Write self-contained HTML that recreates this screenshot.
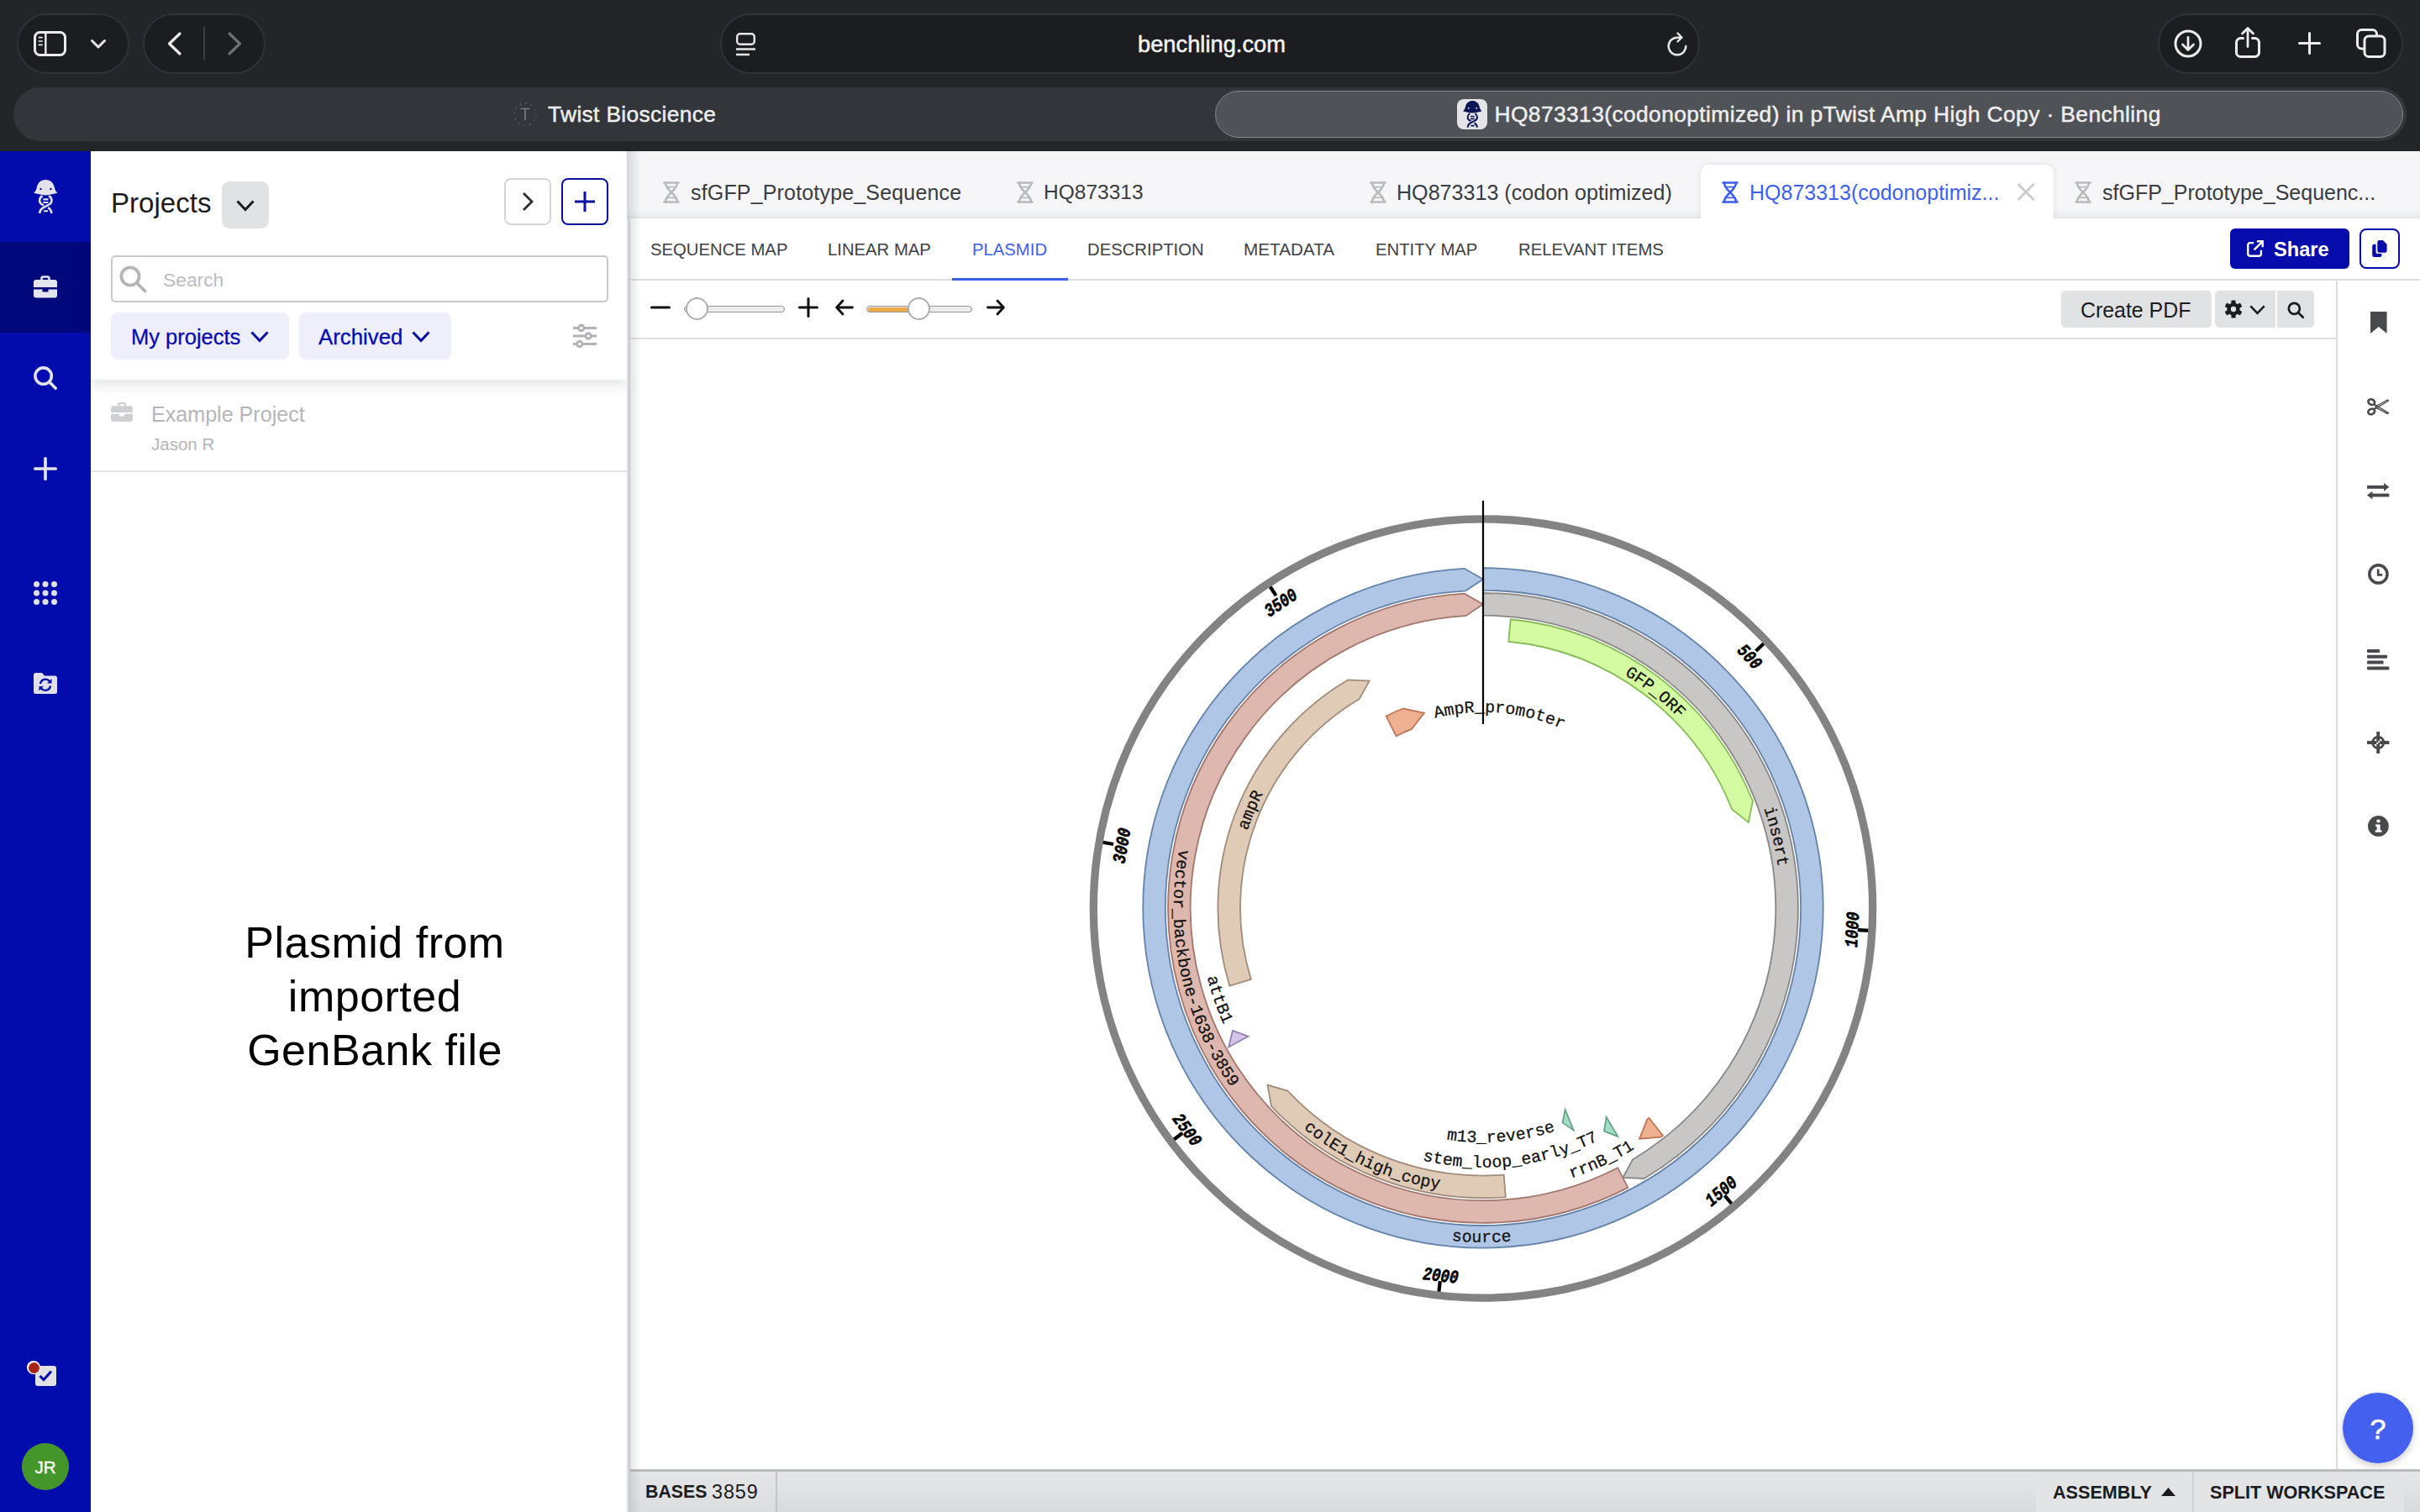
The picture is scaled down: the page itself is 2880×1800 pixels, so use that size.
<!DOCTYPE html>
<html><head><meta charset="utf-8"><title>Benchling</title>
<style>
*{box-sizing:border-box;margin:0;padding:0}
html,body{width:2880px;height:1800px;overflow:hidden;background:#fff;font-family:"Liberation Sans",sans-serif;}
.abs{position:absolute}
.t{position:absolute;white-space:pre;line-height:1}
svg{position:absolute;overflow:visible}
#chrome{position:absolute;left:0;top:0;width:2880px;height:180px;background:#232629}
.pill{position:absolute;top:16px;height:72px;background:#1c1d20;border:2px solid #2f3236;border-radius:36px}
#tabstrip{position:absolute;left:16px;top:104px;width:2848px;height:64px;border-radius:32px;background:#323539}
#acttab{position:absolute;left:1446px;top:108px;width:1414px;height:56px;border-radius:28px;background:#4f5256;border:1.6px solid #83868a}
#side{position:absolute;left:0;top:180px;width:108px;height:1620px;background:#020cad}
#sidesel{position:absolute;left:0;top:288px;width:108px;height:108px;background:#00087b}
#panel{position:absolute;left:108px;top:180px;width:638px;height:1620px;background:#fff}
#panelhead{position:absolute;left:108px;top:180px;width:638px;height:272px;background:#fff;box-shadow:0 6px 14px rgba(30,40,70,.13)}

#tabbar{position:absolute;left:746px;top:180px;width:2134px;height:80px;background:linear-gradient(#f6f6f8 0,#f6f6f8 86%,#eceef0 96%,#e3e5e8 100%)}
#main{position:absolute;left:746px;top:260px;width:2134px;height:1540px;background:#fff}
#lshadow{position:absolute;left:746px;top:180px;width:16px;height:1620px;background:linear-gradient(90deg,rgba(150,155,165,.35),rgba(150,155,165,0))}
#lborder{position:absolute;left:748px;top:260px;width:2px;height:1540px;background:#c9cbce}
.tabt{position:absolute;white-space:pre;line-height:1;font-size:25px;color:#3a3c41;top:217px}
.sub{position:absolute;white-space:pre;line-height:1;font-size:20.3px;color:#3e4045;top:287px}
#acttab2{position:absolute;left:2024px;top:196px;width:420px;height:66px;background:#fff;border-radius:10px 10px 0 0;box-shadow:0 0 6px rgba(60,70,90,.12)}
</style></head>
<body>

<div id="chrome">
 <div class="pill" style="left:20px;width:134px"></div>
 <div class="pill" style="left:170px;width:146px"></div>
 <div class="pill" style="left:857px;width:1166px"></div>
 <div class="pill" style="left:2568px;width:292px"></div>
 <div id="tabstrip"></div>
 <div id="acttab"></div>
 <!-- sidebar icon -->
 <svg style="left:40px;top:37px" width="39" height="30" viewBox="0 0 39 30" fill="none" stroke="#ececec" stroke-width="3">
  <rect x="1.5" y="1.5" width="36" height="27" rx="6"/>
  <path d="M14.3 1.5V28.5" stroke-width="2.4"/>
  <path d="M6.4 7.6H10M6.4 12H10M6.4 16.4H10" stroke-width="1.7" stroke-linecap="round"/>
 </svg>
 <svg style="left:108px;top:47px" width="18" height="11" viewBox="0 0 18 11" fill="none" stroke="#e6e6e6" stroke-width="3" stroke-linecap="round" stroke-linejoin="round"><path d="M1.5 1.5L9 9L16.5 1.5"/></svg>
 <!-- back / fwd -->
 <svg style="left:199px;top:38px" width="17" height="28" viewBox="0 0 17 28" fill="none" stroke="#ececec" stroke-width="3.2" stroke-linecap="round" stroke-linejoin="round"><path d="M15 2L2.5 14L15 26"/></svg>
 <div class="abs" style="left:242px;top:32px;width:2px;height:40px;background:#3a3d41"></div>
 <svg style="left:271px;top:38px" width="17" height="28" viewBox="0 0 17 28" fill="none" stroke="#6d6f73" stroke-width="3.2" stroke-linecap="round" stroke-linejoin="round"><path d="M2 2L14.5 14L2 26"/></svg>
 <!-- url bar reader icon -->
 <svg style="left:876px;top:39px" width="23" height="28" viewBox="0 0 23 28" fill="none" stroke="#e6e6e6" stroke-width="2.4" stroke-linecap="butt"><rect x="1.2" y="1.2" width="20.6" height="12.6" rx="3.5"/><path d="M0 19.5H23M0 26H16"/></svg>
 <div class="t" style="left:1354px;top:39px;font-size:27.3px;color:#f3f3f3;-webkit-text-stroke:.5px #f3f3f3">benchling.com</div>
 <!-- reload -->
 <svg style="left:1984px;top:38px" width="25" height="29" viewBox="0 0 25 29" fill="none" stroke="#e6e6e6" stroke-width="2.4" stroke-linecap="round" stroke-linejoin="round"><path d="M22.3 17A10.3 10.3 0 1 1 12 6.7H17"/><path d="M12.5 1.5L17.5 6.7L12.5 11.5"/></svg>
 <!-- right pill icons -->
 <svg style="left:2587px;top:35px" width="34" height="34" viewBox="0 0 34 34" fill="none" stroke="#ececec" stroke-width="3" stroke-linecap="round" stroke-linejoin="round"><circle cx="17" cy="17" r="15"/><path d="M17 9.5V24M10.5 18L17 24.5L23.5 18" stroke-width="2.8"/></svg>
 <svg style="left:2660px;top:32px" width="30" height="37" viewBox="0 0 30 37" fill="none" stroke="#ececec" stroke-width="3" stroke-linecap="round" stroke-linejoin="round"><path d="M9.5 13.5H6.5A5 5 0 0 0 1.5 18.5V30.5A5 5 0 0 0 6.5 35.5H23.5A5 5 0 0 0 28.5 30.5V18.5A5 5 0 0 0 23.5 13.5H20.5"/><path d="M15 23.5V2M8.5 8L15 1.5L21.5 8" stroke-width="2.8"/></svg>
 <svg style="left:2735px;top:38px" width="27" height="27" viewBox="0 0 27 27" fill="none" stroke="#ececec" stroke-width="3" stroke-linecap="round"><path d="M13.5 1.5V25.5M1.5 13.5H25.5"/></svg>
 <svg style="left:2804px;top:34px" width="36" height="35" viewBox="0 0 36 35" fill="none" stroke="#ececec" stroke-width="3" stroke-linejoin="round"><path d="M9 24H6.5A5 5 0 0 1 1.5 19V6.5A5 5 0 0 1 6.5 1.5H19.5A5 5 0 0 1 24.5 6.5V8.5"/><rect x="10" y="9" width="24" height="24.5" rx="5"/></svg>
 <!-- tab 1 -->
 <svg style="left:611px;top:120px" width="28" height="32" viewBox="0 0 28 32" fill="none" stroke="#63666a" stroke-width="1.4"><circle cx="14" cy="16" r="13" stroke-dasharray="1.6 5.2"/><path d="M8.5 9.5H19.5M14 9.5V23" stroke="#7b7e82" stroke-width="1.6"/></svg>
 <div class="t" style="left:652px;top:123.1px;font-size:26.4px;letter-spacing:.33px;color:#efefef;-webkit-text-stroke:.45px #efefef">Twist Bioscience</div>
 <!-- tab 2 favicon -->
 <div class="abs" style="left:1734px;top:117.6px;width:36px;height:36.5px;border-radius:8px;background:#e5e5e7"></div>
 <svg style="left:1740.6px;top:119.9px" width="22.7" height="31.7" viewBox="0 0 22.7 31.7"><path d="M0 12.3C1.8 11.2 2.6 9.2 3.1 6.7C4.3 2.2 7.3 0 11.35 0C15.4 0 18.4 2.2 19.6 6.7C20.1 9.2 20.9 11.2 22.7 12.3C19.3 13.5 15.3 14.3 11.35 14.6C7.3 14.3 3.3 13.5 0 12.3Z" fill="#0a1555"/><circle cx="6.7" cy="8.7" r=".95" fill="#f0f0f2"/><circle cx="16.2" cy="8.7" r=".95" fill="#f0f0f2"/><g fill="none" stroke="#0a1555" stroke-width="2"><path d="M14.4 15.2C17.9 17.4 17.9 21.6 14.6 23.4L8.6 26.6C6.4 27.9 5.8 29.6 5.8 31.7"/><path d="M8.3 15.2C4.8 17.4 4.8 21.6 8.1 23.4L9.6 24.2M13.6 26.3C16.3 27.9 16.9 29.6 16.9 31.7"/><path d="M9 18.5H13.9M9 21.45H13.9M9.5 29.55H13.6" stroke-width="1.7"/></g></svg>
 <div class="t" style="left:1778.5px;top:123.1px;font-size:26.4px;letter-spacing:.385px;color:#efefef;-webkit-text-stroke:.45px #efefef">HQ873313(codonoptimized) in pTwist Amp High Copy · Benchling</div>
</div>

<div id="side"></div><div id="sidesel"></div>
<!-- logo -->
<svg style="left:39.6px;top:213.8px" width="28.6" height="40.0" viewBox="0 0 22.7 31.7"><path d="M0 12.3C1.8 11.2 2.6 9.2 3.1 6.7C4.3 2.2 7.3 0 11.35 0C15.4 0 18.4 2.2 19.6 6.7C20.1 9.2 20.9 11.2 22.7 12.3C19.3 13.5 15.3 14.3 11.35 14.6C7.3 14.3 3.3 13.5 0 12.3Z" fill="#e4e4e8"/><circle cx="6.7" cy="8.7" r=".95" fill="#020cad"/><circle cx="16.2" cy="8.7" r=".95" fill="#020cad"/><g fill="none" stroke="#e4e4e8" stroke-width="2"><path d="M14.4 15.2C17.9 17.4 17.9 21.6 14.6 23.4L8.6 26.6C6.4 27.9 5.8 29.6 5.8 31.7"/><path d="M8.3 15.2C4.8 17.4 4.8 21.6 8.1 23.4L9.6 24.2M13.6 26.3C16.3 27.9 16.9 29.6 16.9 31.7"/><path d="M9 18.5H13.9M9 21.45H13.9M9.5 29.55H13.6" stroke-width="1.7"/></g></svg>
<!-- briefcase -->
<svg style="left:40px;top:328px" width="28" height="27" viewBox="0 0 28 27"><path d="M9.5 5V3.5A2 2 0 0 1 11.5 1.5H16.5A2 2 0 0 1 18.5 3.5V5" fill="none" stroke="#e4e4ee" stroke-width="2.6"/><path d="M3 5H25A3 3 0 0 1 28 8V14H0V8A3 3 0 0 1 3 5Z" fill="#e4e4ee"/><path d="M0 16.5H10.5V19.5H17.5V16.5H28V23.5A3 3 0 0 1 25 26.5H3A3 3 0 0 1 0 23.5Z" fill="#e4e4ee"/></svg>
<!-- search -->
<svg style="left:40px;top:436px" width="28" height="28" viewBox="0 0 28 28" fill="none" stroke="#e2e2ea" stroke-width="3.6" stroke-linecap="round"><circle cx="11.6" cy="11.6" r="9.7"/><path d="M19 19L26.2 26.2"/></svg>
<!-- plus -->
<svg style="left:40px;top:544px" width="28" height="28" viewBox="0 0 28 28" fill="none" stroke="#e2e2ea" stroke-width="3.7" stroke-linecap="round"><path d="M14 1.8V26.2M1.8 14H26.2"/></svg>
<!-- grid -->
<svg style="left:40px;top:692px" width="28" height="28" viewBox="0 0 28 28" fill="#e0e0ea"><circle cx="3.5" cy="3.5" r="3.5"/><circle cx="14" cy="3.5" r="3.5"/><circle cx="24.5" cy="3.5" r="3.5"/><circle cx="3.5" cy="14" r="3.5"/><circle cx="14" cy="14" r="3.5"/><circle cx="24.5" cy="14" r="3.5"/><circle cx="3.5" cy="24.5" r="3.5"/><circle cx="14" cy="24.5" r="3.5"/><circle cx="24.5" cy="24.5" r="3.5"/></svg>
<!-- folder sync -->
<svg style="left:40px;top:801px" width="28" height="25" viewBox="0 0 28 25"><path d="M0 2.5A2.5 2.5 0 0 1 2.5 0H10L13 3.5H25.5A2.5 2.5 0 0 1 28 6V22.5A2.5 2.5 0 0 1 25.5 25H2.5A2.5 2.5 0 0 1 0 22.5Z" fill="#e0e0ea"/><g fill="none" stroke="#020cad" stroke-width="2.4"><path d="M8 13A6.2 6.2 0 0 1 19 10"/><path d="M20 15.5A6.2 6.2 0 0 1 9 18.5"/></g><path d="M21.5 7V12.5H16Z" fill="#020cad"/><path d="M6.5 21.5V16H12Z" fill="#020cad"/></svg>
<!-- tasks -->
<div class="abs" style="left:42px;top:1626px;width:25px;height:24px;border-radius:3px;background:#e2e2e6"></div>
<svg style="left:46px;top:1630px" width="17" height="16" viewBox="0 0 17 16" fill="none" stroke="#020cad" stroke-width="3"><path d="M1.5 8L6 12.5L15 2.5"/></svg>
<div class="abs" style="left:32px;top:1620px;width:16px;height:16px;border-radius:8px;background:#fff"></div>
<div class="abs" style="left:33.5px;top:1621.5px;width:13px;height:13px;border-radius:7px;background:#a82318"></div>
<!-- avatar -->
<div class="abs" style="left:26px;top:1718px;width:56px;height:56px;border-radius:28px;background:#44962a"></div>
<div class="t" style="left:26px;top:1736.5px;width:56px;text-align:center;font-size:20.6px;color:#fff;-webkit-text-stroke:.4px #fff">JR</div>

<div id="panel"></div>
<!-- project row -->
<svg style="left:132px;top:479px" width="26" height="23" viewBox="0 0 28 25"><path d="M9.5 4.5V3.2A2 2 0 0 1 11.5 1.2H16.5A2 2 0 0 1 18.5 3.2V4.5" fill="none" stroke="#cecfd2" stroke-width="2.4"/><path d="M3 4.5H25A3 3 0 0 1 28 7.5V13H0V7.5A3 3 0 0 1 3 4.5Z" fill="#cecfd2"/><path d="M0 15H10.5V18H17.5V15H28V22A3 3 0 0 1 25 25H3A3 3 0 0 1 0 22Z" fill="#cecfd2"/></svg>
<div class="t" style="left:180px;top:480.5px;font-size:25.1px;color:#b5b6b9">Example Project</div>
<div class="t" style="left:180px;top:519px;font-size:20.5px;color:#b5b6b9">Jason R</div>
<div class="abs" style="left:108px;top:560px;width:638px;height:2px;background:#e3e4e6"></div>
<div id="panelhead"></div>
<div class="t" style="left:132px;top:225.2px;font-size:33.1px;color:#1b1c20">Projects</div>
<div class="abs" style="left:264px;top:216px;width:56px;height:56px;border-radius:9px;background:#e1e2e4"></div>
<svg style="left:281px;top:238px" width="22" height="14" viewBox="0 0 22 14" fill="none" stroke="#1b1c20" stroke-width="3"><path d="M1.5 1.5L11 11.5L20.5 1.5"/></svg>
<div class="abs" style="left:600px;top:212px;width:56px;height:56px;border-radius:8px;border:2px solid #d4d5d8;background:#fff"></div>
<svg style="left:621px;top:228px" width="14" height="24" viewBox="0 0 14 24" fill="none" stroke="#2a2c30" stroke-width="2.8"><path d="M2 2L12 12L2 22"/></svg>
<div class="abs" style="left:668px;top:212px;width:56px;height:56px;border-radius:8px;border:2.5px solid #0a0fa4;background:#fff"></div>
<svg style="left:683px;top:227px" width="26" height="26" viewBox="0 0 26 26" fill="none" stroke="#0a0fa4" stroke-width="3"><path d="M13 1V25M1 13H25"/></svg>
<!-- search box -->
<div class="abs" style="left:132px;top:304px;width:592px;height:56px;border-radius:5px;border:2px solid #c9cacd;background:#fff"></div>
<svg style="left:142px;top:316px" width="33" height="33" viewBox="0 0 33 33" fill="none" stroke="#b4b5b8" stroke-width="3.8" stroke-linecap="round"><circle cx="13" cy="13" r="10.6"/><path d="M21 21L30.5 30.5"/></svg>
<div class="t" style="left:194px;top:321.7px;font-size:22.8px;color:#bbbcbf">Search</div>
<!-- chips -->
<div class="abs" style="left:132px;top:372px;width:212px;height:56px;border-radius:8px;background:#efeffc"></div>
<div class="t" style="left:156px;top:388.5px;font-size:25.5px;color:#060cb0;-webkit-text-stroke:.3px #060cb0">My projects</div>
<svg style="left:298px;top:394px" width="22" height="14" viewBox="0 0 22 14" fill="none" stroke="#0a0fa4" stroke-width="3"><path d="M1.5 1.5L11 11.5L20.5 1.5"/></svg>
<div class="abs" style="left:356px;top:372px;width:181px;height:56px;border-radius:8px;background:#efeffc"></div>
<div class="t" style="left:379px;top:388.5px;font-size:25.8px;color:#060cb0;-webkit-text-stroke:.3px #060cb0">Archived</div>
<svg style="left:490px;top:394px" width="22" height="14" viewBox="0 0 22 14" fill="none" stroke="#0a0fa4" stroke-width="3"><path d="M1.5 1.5L11 11.5L20.5 1.5"/></svg>
<!-- filter icon -->
<svg style="left:682px;top:386px" width="28" height="28" viewBox="0 0 28 28" fill="none" stroke="#b1b2b5" stroke-width="2.9"><path d="M0 4.5H6.5M13 4.5H28M0 14H15M21.5 14H28M0 23.5H4.5M11 23.5H28"/><circle cx="9.8" cy="4.5" r="3.2"/><circle cx="18.2" cy="14" r="3.2"/><circle cx="7.8" cy="23.5" r="3.2"/></svg>
<!-- big text -->
<div class="t" style="left:146px;top:1090.2px;width:600px;text-align:center;font-size:52px;line-height:64.1px;letter-spacing:.5px;color:#000;white-space:pre-line">Plasmid from
imported
GenBank file</div>

<div id="tabbar"></div>
<div id="main"></div>
<div id="acttab2"></div>
<div class="abs" style="left:2010px;top:260px;width:450px;height:10px;background:#fff"></div>
<svg style="left:789px;top:216px" width="20" height="26" viewBox="0 0 20 26" fill="none" stroke="#b9babd" stroke-width="2.6" stroke-linecap="round"><path d="M1.4 1.4H18.6M1.4 24.6H18.6" stroke-width="2.5"/><path d="M3 1.5C3 11.5 17 14.5 17 24.5"/><path d="M17 1.5C17 11.5 3 14.5 3 24.5"/><path d="M5.6 6.6H14.4M5.6 19.4H14.4" stroke-width="1.9"/></svg>
<div class="tabt" style="left:822px;letter-spacing:.17px">sfGFP_Prototype_Sequence</div>
<svg style="left:1210px;top:216px" width="20" height="26" viewBox="0 0 20 26" fill="none" stroke="#b9babd" stroke-width="2.6" stroke-linecap="round"><path d="M1.4 1.4H18.6M1.4 24.6H18.6" stroke-width="2.5"/><path d="M3 1.5C3 11.5 17 14.5 17 24.5"/><path d="M17 1.5C17 11.5 3 14.5 3 24.5"/><path d="M5.6 6.6H14.4M5.6 19.4H14.4" stroke-width="1.9"/></svg>
<div class="tabt" style="left:1242px;font-size:24.5px">HQ873313</div>
<svg style="left:1630px;top:216px" width="20" height="26" viewBox="0 0 20 26" fill="none" stroke="#b9babd" stroke-width="2.6" stroke-linecap="round"><path d="M1.4 1.4H18.6M1.4 24.6H18.6" stroke-width="2.5"/><path d="M3 1.5C3 11.5 17 14.5 17 24.5"/><path d="M17 1.5C17 11.5 3 14.5 3 24.5"/><path d="M5.6 6.6H14.4M5.6 19.4H14.4" stroke-width="1.9"/></svg>
<div class="tabt" style="left:1662px;font-size:25.1px">HQ873313 (codon optimized)</div>
<svg style="left:2049px;top:216px" width="20" height="26" viewBox="0 0 20 26" fill="none" stroke="#3f5ff0" stroke-width="2.6" stroke-linecap="round"><path d="M1.4 1.4H18.6M1.4 24.6H18.6" stroke-width="2.5"/><path d="M3 1.5C3 11.5 17 14.5 17 24.5"/><path d="M17 1.5C17 11.5 3 14.5 3 24.5"/><path d="M5.6 6.6H14.4M5.6 19.4H14.4" stroke-width="1.9"/></svg>
<div class="tabt" style="left:2082px;color:#3f5ff0">HQ873313(codonoptimiz...</div>
<svg style="left:2400px;top:218px" width="22" height="21" viewBox="0 0 22 21" fill="none" stroke="#cbccce" stroke-width="2.9"><path d="M1.5 1L20.5 20M20.5 1L1.5 20"/></svg>
<svg style="left:2469px;top:216px" width="20" height="26" viewBox="0 0 20 26" fill="none" stroke="#b9babd" stroke-width="2.6" stroke-linecap="round"><path d="M1.4 1.4H18.6M1.4 24.6H18.6" stroke-width="2.5"/><path d="M3 1.5C3 11.5 17 14.5 17 24.5"/><path d="M17 1.5C17 11.5 3 14.5 3 24.5"/><path d="M5.6 6.6H14.4M5.6 19.4H14.4" stroke-width="1.9"/></svg>
<div class="tabt" style="left:2502px">sfGFP_Prototype_Sequenc...</div>
<!-- sub tabs -->
<div class="abs" style="left:749px;top:332px;width:2131px;height:2px;background:#dcdde0"></div>
<div class="sub" style="left:774px">SEQUENCE MAP</div>
<div class="sub" style="left:985px">LINEAR MAP</div>
<div class="sub" style="left:1157px;color:#3f5ff0">PLASMID</div>
<div class="sub" style="left:1294px">DESCRIPTION</div>
<div class="sub" style="left:1480px;font-size:20.7px">METADATA</div>
<div class="sub" style="left:1637px">ENTITY MAP</div>
<div class="sub" style="left:1807px">RELEVANT ITEMS</div>
<div class="abs" style="left:1133px;top:331px;width:138px;height:3px;background:#3f5ff0"></div>
<!-- share -->
<div class="abs" style="left:2654px;top:272px;width:142px;height:48px;border-radius:6px;background:#060bab"></div>
<svg style="left:2674px;top:286.2px" width="20" height="20" viewBox="0 0 22 22" fill="none" stroke="#fff" stroke-width="2.6"><path d="M9 3.5H4A2.6 2.6 0 0 0 1.4 6.1V18A2.6 2.6 0 0 0 4 20.6H16A2.6 2.6 0 0 0 18.6 18V13"/><path d="M13 1.4H20.6V9M20.3 1.7L9.5 12.5"/></svg>
<div class="t" style="left:2706px;top:285.5px;font-size:23.6px;color:#fff;font-weight:bold">Share</div>
<div class="abs" style="left:2808px;top:272px;width:48px;height:48px;border-radius:8px;border:2.5px solid #060bab;background:#fff"></div>
<svg style="left:2823.2px;top:286.2px" width="17.8" height="20" viewBox="0 0 20 23"><path d="M0 8A2.5 2.5 0 0 1 2.5 5.5H5V16.5A2 2 0 0 0 7 18.5H13V20.5A2.5 2.5 0 0 1 10.5 23H2.5A2.5 2.5 0 0 1 0 20.5Z" fill="#060bab"/><path d="M7 2.5A2.5 2.5 0 0 1 9.5 0H14.5L20 5.5V14.5A2.5 2.5 0 0 1 17.5 17H9.5A2.5 2.5 0 0 1 7 14.5Z" fill="#060bab"/></svg>
<!-- toolbar -->
<div class="abs" style="left:749px;top:401.5px;width:2033px;height:2px;background:#dddee0"></div>
<svg style="left:774px;top:354px" width="24" height="24" viewBox="0 0 24 24" fill="none" stroke="#111" stroke-width="3" stroke-linecap="round"><path d="M1.5 12H22.5"/></svg>
<div class="abs" style="left:814px;top:364px;width:120px;height:8px;border-radius:4px;background:#ececec;border:1.5px solid #97979b"></div>
<div class="abs" style="left:816.3px;top:354.2px;width:26.6px;height:26.6px;border-radius:14px;background:#fff;border:2px solid #adadad"></div>
<svg style="left:950px;top:354px" width="24" height="24" viewBox="0 0 24 24" fill="none" stroke="#111" stroke-width="3" stroke-linecap="round"><path d="M1.5 12H22.5M12 1.5V22.5"/></svg>
<svg style="left:994px;top:356px" width="22" height="20" viewBox="0 0 22 20" fill="none" stroke="#111" stroke-width="2.8" stroke-linecap="round" stroke-linejoin="round"><path d="M20.5 10H2M9 2L1.6 10L9 18"/></svg>
<div class="abs" style="left:1031px;top:364px;width:126px;height:8px;border-radius:4px;background:#ececec;border:1.5px solid #97979b"></div>
<div class="abs" style="left:1032.5px;top:365.5px;width:60px;height:5px;border-radius:3px 0 0 3px;background:#ecab48"></div>
<div class="abs" style="left:1080.3px;top:354.2px;width:26.6px;height:26.6px;border-radius:14px;background:#fff;border:2px solid #adadad"></div>
<svg style="left:1174px;top:356px" width="22" height="20" viewBox="0 0 22 20" fill="none" stroke="#111" stroke-width="2.8" stroke-linecap="round" stroke-linejoin="round"><path d="M1.5 10H20M13 2L20.4 10L13 18"/></svg>
<div class="abs" style="left:2453px;top:346px;width:179px;height:44px;border-radius:5px;background:#e1e2e4"></div>
<div class="t" style="left:2476px;top:356.8px;font-size:24.9px;color:#1b1c20">Create PDF</div>
<div class="abs" style="left:2636px;top:346px;width:71.5px;height:44px;border-radius:5px 0 0 5px;background:#e1e2e4"></div>
<div class="abs" style="left:2710px;top:346px;width:44px;height:44px;border-radius:0 5px 5px 0;background:#e1e2e4"></div>
<svg style="left:2647px;top:357px" width="22" height="22" viewBox="-11 -11 22 22"><g fill="#1b1c20"><circle r="7.6"/><g id="gt"><rect x="-2.6" y="-10.6" width="5.2" height="21.2" rx="1.2"/></g><use href="#gt" transform="rotate(60)"/><use href="#gt" transform="rotate(120)"/></g><circle r="3.2" fill="#e1e2e4"/></svg>
<svg style="left:2677px;top:363px" width="19" height="12" viewBox="0 0 19 12" fill="none" stroke="#1b1c20" stroke-width="2.6"><path d="M1.3 1.3L9.5 9.8L17.7 1.3"/></svg>
<svg style="left:2722px;top:358.6px" width="20.6" height="20.6" viewBox="0 0 23 23" fill="none" stroke="#1b1c20" stroke-width="3" stroke-linecap="round"><circle cx="9.3" cy="9.3" r="7.3"/><path d="M15 15L21 21"/></svg>
<!-- right sidebar -->
<div class="abs" style="left:2780px;top:334px;width:2px;height:1416px;background:#dcdde0"></div>
<svg style="left:2821.4px;top:370.8px" width="19.6" height="26" viewBox="0 0 21 28"><path d="M0 0H21V28L10.5 19.5L0 28Z" fill="#47494d"/></svg>
<svg style="left:2816.8px;top:474px" width="26.4" height="20.6" viewBox="0 0 26.4 20.6" fill="none" stroke="#47494d"><ellipse cx="5.2" cy="4.6" rx="4" ry="3.1" transform="rotate(25 5.2 4.6)" stroke-width="2.6"/><ellipse cx="5.2" cy="16" rx="4" ry="3.1" transform="rotate(-25 5.2 16)" stroke-width="2.6"/><path d="M8.6 7.2L25.6 17.6L24.4 18.6L11.2 11.4ZM8.6 13.4L25.6 3L24.4 2L11.2 9.2Z" fill="#fff" stroke-width="1.3" stroke-linejoin="round"/><circle cx="12.6" cy="10.3" r=".9" fill="#47494d" stroke="none"/></svg>
<svg style="left:2816.8px;top:575px" width="26.4" height="19.4" viewBox="0 0 26.4 19.4" fill="#47494d"><rect x="0" y="2.9" width="21" height="3.9"/><path d="M20 0L26.4 4.85L20 9.7Z"/><rect x="5.4" y="12.6" width="21" height="3.9"/><path d="M6.4 9.7L0 14.55L6.4 19.4Z"/></svg>
<svg style="left:2817.6px;top:671.3px" width="24.8" height="24.8" viewBox="0 0 24.8 24.8" fill="none" stroke="#47494d" stroke-width="3.5"><circle cx="12.4" cy="12.4" r="10.6"/><path d="M12.2 6.4V13.4H17.2" stroke-width="2.6"/></svg>
<svg style="left:2816.8px;top:772.9px" width="26.4" height="24.4" viewBox="0 0 26.4 24.4" fill="#47494d"><rect x="0" y="0" width="15.2" height="4" rx="1"/><rect x="0" y="6.8" width="24" height="4" rx="1"/><rect x="0" y="13.6" width="19.6" height="4" rx="1"/><rect x="0" y="20.4" width="26.4" height="4" rx="1"/></svg>
<svg style="left:2816.8px;top:871px" width="26.4" height="26" viewBox="0 0 26.4 26" fill="none" stroke="#47494d"><circle cx="13.2" cy="13" r="6.6" stroke-width="2.8"/><path d="M13.2 0V26M0 13H26.4" stroke-width="3.9"/><rect x="11.25" y="11.05" width="3.9" height="3.9" fill="#fff" stroke="none"/><rect x="11.25" y="11.05" width="1.95" height="1.95" fill="#47494d" stroke="none"/><rect x="13.2" y="13" width="1.95" height="1.95" fill="#47494d" stroke="none"/></svg>
<svg style="left:2817.6px;top:971.4px" width="24.8" height="24.8" viewBox="0 0 26 26"><circle cx="13" cy="13" r="13" fill="#47494d"/><rect x="11" y="5" width="4.2" height="3.6" rx=".8" fill="#fff"/><path d="M9.6 11H15.3V18.2H17.2V20.8H9.2V18.2H11.2V13.6H9.6Z" fill="#fff"/></svg>
<!-- help -->
<div class="abs" style="left:2788px;top:1658px;width:84px;height:84px;border-radius:42px;background:#4361ee;box-shadow:0 3px 8px rgba(0,0,0,.22)"></div>
<div class="t" style="left:2788px;top:1684px;width:84px;text-align:center;font-size:34px;color:#fff;-webkit-text-stroke:.7px #fff">?</div>
<!-- bottom bar -->
<div class="abs" style="left:749px;top:1750px;width:2131px;height:50px;background:linear-gradient(#e6e7e9,#d9dadc)"></div>
<div class="abs" style="left:749px;top:1749px;width:2131px;height:3px;background:#b9bdc1"></div>
<div class="abs" style="left:749px;top:1752px;width:174px;height:48px;background:linear-gradient(#e4e5e7,#dcdddf)"></div>
<div class="abs" style="left:923px;top:1752px;width:2px;height:48px;background:#c2c5c9"></div>
<div class="t" style="left:768px;top:1766px;font-size:21.3px;font-weight:bold;color:#1b1c20">BASES</div>
<div class="t" style="left:847px;top:1765px;font-size:23.4px;letter-spacing:.9px;color:#1b1c20">3859</div>
<div class="abs" style="left:2423px;top:1752px;width:438px;height:48px;background:#e3e4e6"></div>
<div class="abs" style="left:2609px;top:1752px;width:2px;height:48px;background:#cfd1d4"></div>
<div class="t" style="left:2443px;top:1766px;font-size:21.6px;font-weight:bold;color:#1b1c20">ASSEMBLY</div>
<svg style="left:2572px;top:1771px" width="17" height="10" viewBox="0 0 17 10"><path d="M0 10L8.5 0L17 10Z" fill="#1b1c20"/></svg>
<div class="t" style="left:2630px;top:1766px;font-size:21.6px;font-weight:bold;color:#1b1c20">SPLIT WORKSPACE</div>
<div id="lshadow"></div><div id="lborder"></div>
<svg style="left:0;top:0" width="2880" height="1800" viewBox="0 0 2880 1800">
<line x1="2089.65" y1="774.92" x2="2100.20" y2="764.96" stroke="#000" stroke-width="4.2"/>
<text transform="translate(2082.60 781.58) rotate(46.64) scale(.98 1.22)" y="6.05" font-family="Liberation Mono" font-weight="bold" font-style="italic" font-size="18" text-anchor="middle" fill="#000" stroke="#000" stroke-width=".45">500</text>
<line x1="2210.76" y1="1107.06" x2="2225.24" y2="1107.89" stroke="#000" stroke-width="4.2"/>
<text transform="translate(2203.78 1106.66) rotate(-86.71) scale(.98 1.22)" y="6.05" font-family="Liberation Mono" font-weight="bold" font-style="italic" font-size="18" text-anchor="middle" fill="#000" stroke="#000" stroke-width=".45">1000</text>
<line x1="2052.41" y1="1423.15" x2="2061.74" y2="1434.25" stroke="#000" stroke-width="4.2"/>
<text transform="translate(2047.90 1417.79) rotate(-40.07) scale(.98 1.22)" y="6.05" font-family="Liberation Mono" font-weight="bold" font-style="italic" font-size="18" text-anchor="middle" fill="#000" stroke="#000" stroke-width=".45">1500</text>
<line x1="1713.86" y1="1525.01" x2="1712.20" y2="1539.42" stroke="#000" stroke-width="4.2"/>
<text transform="translate(1714.66 1518.06) rotate(6.58) scale(.98 1.22)" y="6.05" font-family="Liberation Mono" font-weight="bold" font-style="italic" font-size="18" text-anchor="middle" fill="#000" stroke="#000" stroke-width=".45">2000</text>
<line x1="1407.38" y1="1348.78" x2="1395.76" y2="1357.46" stroke="#000" stroke-width="4.2"/>
<text transform="translate(1412.98 1344.59) rotate(53.22) scale(.98 1.22)" y="6.05" font-family="Liberation Mono" font-weight="bold" font-style="italic" font-size="18" text-anchor="middle" fill="#000" stroke="#000" stroke-width=".45">2500</text>
<line x1="1325.10" y1="1004.95" x2="1310.82" y2="1002.47" stroke="#000" stroke-width="4.2"/>
<text transform="translate(1334.66 1006.61) rotate(279.87) scale(.98 1.22)" y="6.05" font-family="Liberation Mono" font-weight="bold" font-style="italic" font-size="18" text-anchor="middle" fill="#000" stroke="#000" stroke-width=".45">3000</text>
<line x1="1518.62" y1="709.08" x2="1510.62" y2="696.99" stroke="#000" stroke-width="4.2"/>
<text transform="translate(1523.97 717.17) rotate(326.51) scale(.98 1.22)" y="6.05" font-family="Liberation Mono" font-weight="bold" font-style="italic" font-size="18" text-anchor="middle" fill="#000" stroke="#000" stroke-width=".45">3500</text>
<circle cx="1765.0" cy="1081.45" r="463.65" fill="none" stroke="#838383" stroke-width="9.3"/>
<path d="M1765.00 676.20A404.70 404.70 0 0 1 2169.66 1075.34A404.70 404.70 0 0 1 1776.11 1485.45A404.70 404.70 0 0 1 1360.64 1097.57A404.70 404.70 0 0 1 1742.78 676.81L1765.00 689.50L1744.24 703.37A378.10 378.10 0 0 0 1387.22 1096.47A378.10 378.10 0 0 0 1775.38 1458.86A378.10 378.10 0 0 0 2143.06 1075.71A378.10 378.10 0 0 0 1765.00 702.80Z" fill="#b0c6e6" stroke="#6483ab" stroke-width="1.8" stroke-linejoin="miter"/>
<path d="M1765.00 706.00A374.90 374.90 0 0 1 1956.83 1403.00L1931.24 1402.02L1943.22 1380.15A348.30 348.30 0 0 0 1765.00 732.60Z" fill="#c9c6c6" stroke="#8a8686" stroke-width="1.8" stroke-linejoin="miter"/>
<path d="M1937.35 1413.83A374.90 374.90 0 0 1 1403.54 1180.38A374.90 374.90 0 0 1 1742.72 706.66L1765.00 719.30L1744.30 733.22A348.30 348.30 0 0 0 1429.19 1173.32A348.30 348.30 0 0 0 1925.13 1390.21Z" fill="#deb7ae" stroke="#a2766c" stroke-width="1.8" stroke-linejoin="miter"/>
<path d="M1797.79 737.26A345.20 345.20 0 0 1 2085.93 953.76L2080.83 978.89L2061.20 963.56A318.60 318.60 0 0 0 1795.26 763.74Z" fill="#d4fba2" stroke="#86bd58" stroke-width="1.8" stroke-linejoin="miter"/>
<path d="M1791.78 1425.06A345.20 345.20 0 0 1 1513.00 1316.82L1508.53 1291.57L1532.41 1298.64A318.60 318.60 0 0 0 1789.72 1398.54Z" fill="#e0cbb7" stroke="#a18c7b" stroke-width="1.8" stroke-linejoin="miter"/>
<path d="M1463.35 1173.70A315.60 315.60 0 0 1 1603.99 809.46L1629.64 810.60L1617.56 832.34A289.00 289.00 0 0 0 1488.78 1165.88Z" fill="#e0cbb7" stroke="#a18c7b" stroke-width="1.8" stroke-linejoin="miter"/>
<path d="M1649.67 852.58A255.80 255.80 0 0 1 1669.67 843.53L1694.91 848.75L1679.59 868.21A229.20 229.20 0 0 0 1661.66 876.32Z" fill="#f0b193" stroke="#bf7550" stroke-width="1.8" stroke-linejoin="miter"/>
<path d="M1978.95 1351.80A345.20 345.20 0 0 1 1976.63 1353.62L1951.08 1355.73L1960.32 1332.60A318.60 318.60 0 0 0 1962.46 1330.93Z" fill="#f0b193" stroke="#bf7550" stroke-width="1.8" stroke-linejoin="miter"/>
<path d="M1925.18 1352.83L1909.01 1346.69L1911.68 1329.91Z" fill="#a6dcc6" stroke="#63a487" stroke-width="1.8" stroke-linejoin="miter"/>
<path d="M1872.71 1345.63L1859.54 1336.47L1862.68 1320.99Z" fill="#a6dcc6" stroke="#63a487" stroke-width="1.8" stroke-linejoin="miter"/>
<path d="M1462.12 1246.51L1466.94 1226.92L1485.46 1233.75Z" fill="#d3c5ea" stroke="#8f80b2" stroke-width="1.8" stroke-linejoin="miter"/>
<path id="tp1" d="M1706.82 1474.52A397.90 397.90 0 0 0 1819.74 1475.02" fill="none"/><text font-family="Liberation Mono" font-size="19.9" fill="#111" stroke="#111" stroke-width=".25" text-anchor="middle"><textPath href="#tp1" startOffset="50%">source</textPath></text>
<path id="tp2" d="M2092.44 945.33A354.40 354.40 0 0 1 2118.10 1050.57" fill="none"/><text font-family="Liberation Mono" font-size="19.9" fill="#111" stroke="#111" stroke-width=".25" text-anchor="middle"><textPath href="#tp2" startOffset="50%">insert</textPath></text>
<path id="tp3" d="M1407.80 991.97A368.10 368.10 0 0 0 1476.85 1309.95" fill="none"/><text font-family="Liberation Mono" font-size="19.9" fill="#111" stroke="#111" stroke-width=".25" text-anchor="middle"><textPath href="#tp3" startOffset="50%">vector_backbone-1638-3859</textPath></text>
<path id="tp4" d="M1918.57 794.81A324.70 324.70 0 0 1 2009.96 867.77" fill="none"/><text font-family="Liberation Mono" font-size="19.9" fill="#111" stroke="#111" stroke-width=".25" text-anchor="middle"><textPath href="#tp4" startOffset="50%">GFP_ORF</textPath></text>
<path id="tp5" d="M1537.86 1331.74A338.40 338.40 0 0 0 1730.58 1417.54" fill="none"/><text font-family="Liberation Mono" font-size="19.9" fill="#111" stroke="#111" stroke-width=".25" text-anchor="middle"><textPath href="#tp5" startOffset="50%">colE1_high_copy</textPath></text>
<path id="tp6" d="M1480.17 1003.71A295.10 295.10 0 0 1 1510.57 931.41" fill="none"/><text font-family="Liberation Mono" font-size="19.9" fill="#111" stroke="#111" stroke-width=".25" text-anchor="middle"><textPath href="#tp6" startOffset="50%">ampR</textPath></text>
<path id="tp7" d="M1707.79 854.83A233.20 233.20 0 0 1 1881.37 878.81" fill="none"/><text font-family="Liberation Mono" font-size="19.9" fill="#111" stroke="#111" stroke-width=".25" text-anchor="start"><textPath href="#tp7" startOffset="0%">AmpR_promoter</textPath></text>
<path id="tp8" d="M1835.65 1411.84A338.40 338.40 0 0 0 1945.33 1367.25" fill="none"/><text font-family="Liberation Mono" font-size="19.9" fill="#111" stroke="#111" stroke-width=".25" text-anchor="end"><textPath href="#tp8" startOffset="100%">rrnB_T1</textPath></text>
<path id="tp9" d="M1661.86 1371.97A308.80 308.80 0 0 0 1902.14 1357.58" fill="none"/><text font-family="Liberation Mono" font-size="19.9" fill="#111" stroke="#111" stroke-width=".25" text-anchor="end"><textPath href="#tp9" startOffset="100%">stem_loop_early_T7</textPath></text>
<path id="tp10" d="M1692.86 1350.41A279.00 279.00 0 0 0 1851.16 1346.26" fill="none"/><text font-family="Liberation Mono" font-size="19.9" fill="#111" stroke="#111" stroke-width=".25" text-anchor="end"><textPath href="#tp10" startOffset="100%">m13_reverse</textPath></text>
<path id="tp11" d="M1429.97 1128.54A338.40 338.40 0 0 0 1456.34 1219.62" fill="none"/><text font-family="Liberation Mono" font-size="19.9" fill="#111" stroke="#111" stroke-width=".25" text-anchor="end"><textPath href="#tp11" startOffset="100%">attB1</textPath></text>
<line x1="1765.0" y1="596" x2="1765.0" y2="862" stroke="#000" stroke-width="2.2"/>
</svg>
<script>(function(){var s=window.innerWidth/2880;if(s>0&&Math.abs(s-1)>0.01){var b=document.body;b.style.transformOrigin="0 0";b.style.transform="scale("+s+")";}})();</script>
</body></html>
